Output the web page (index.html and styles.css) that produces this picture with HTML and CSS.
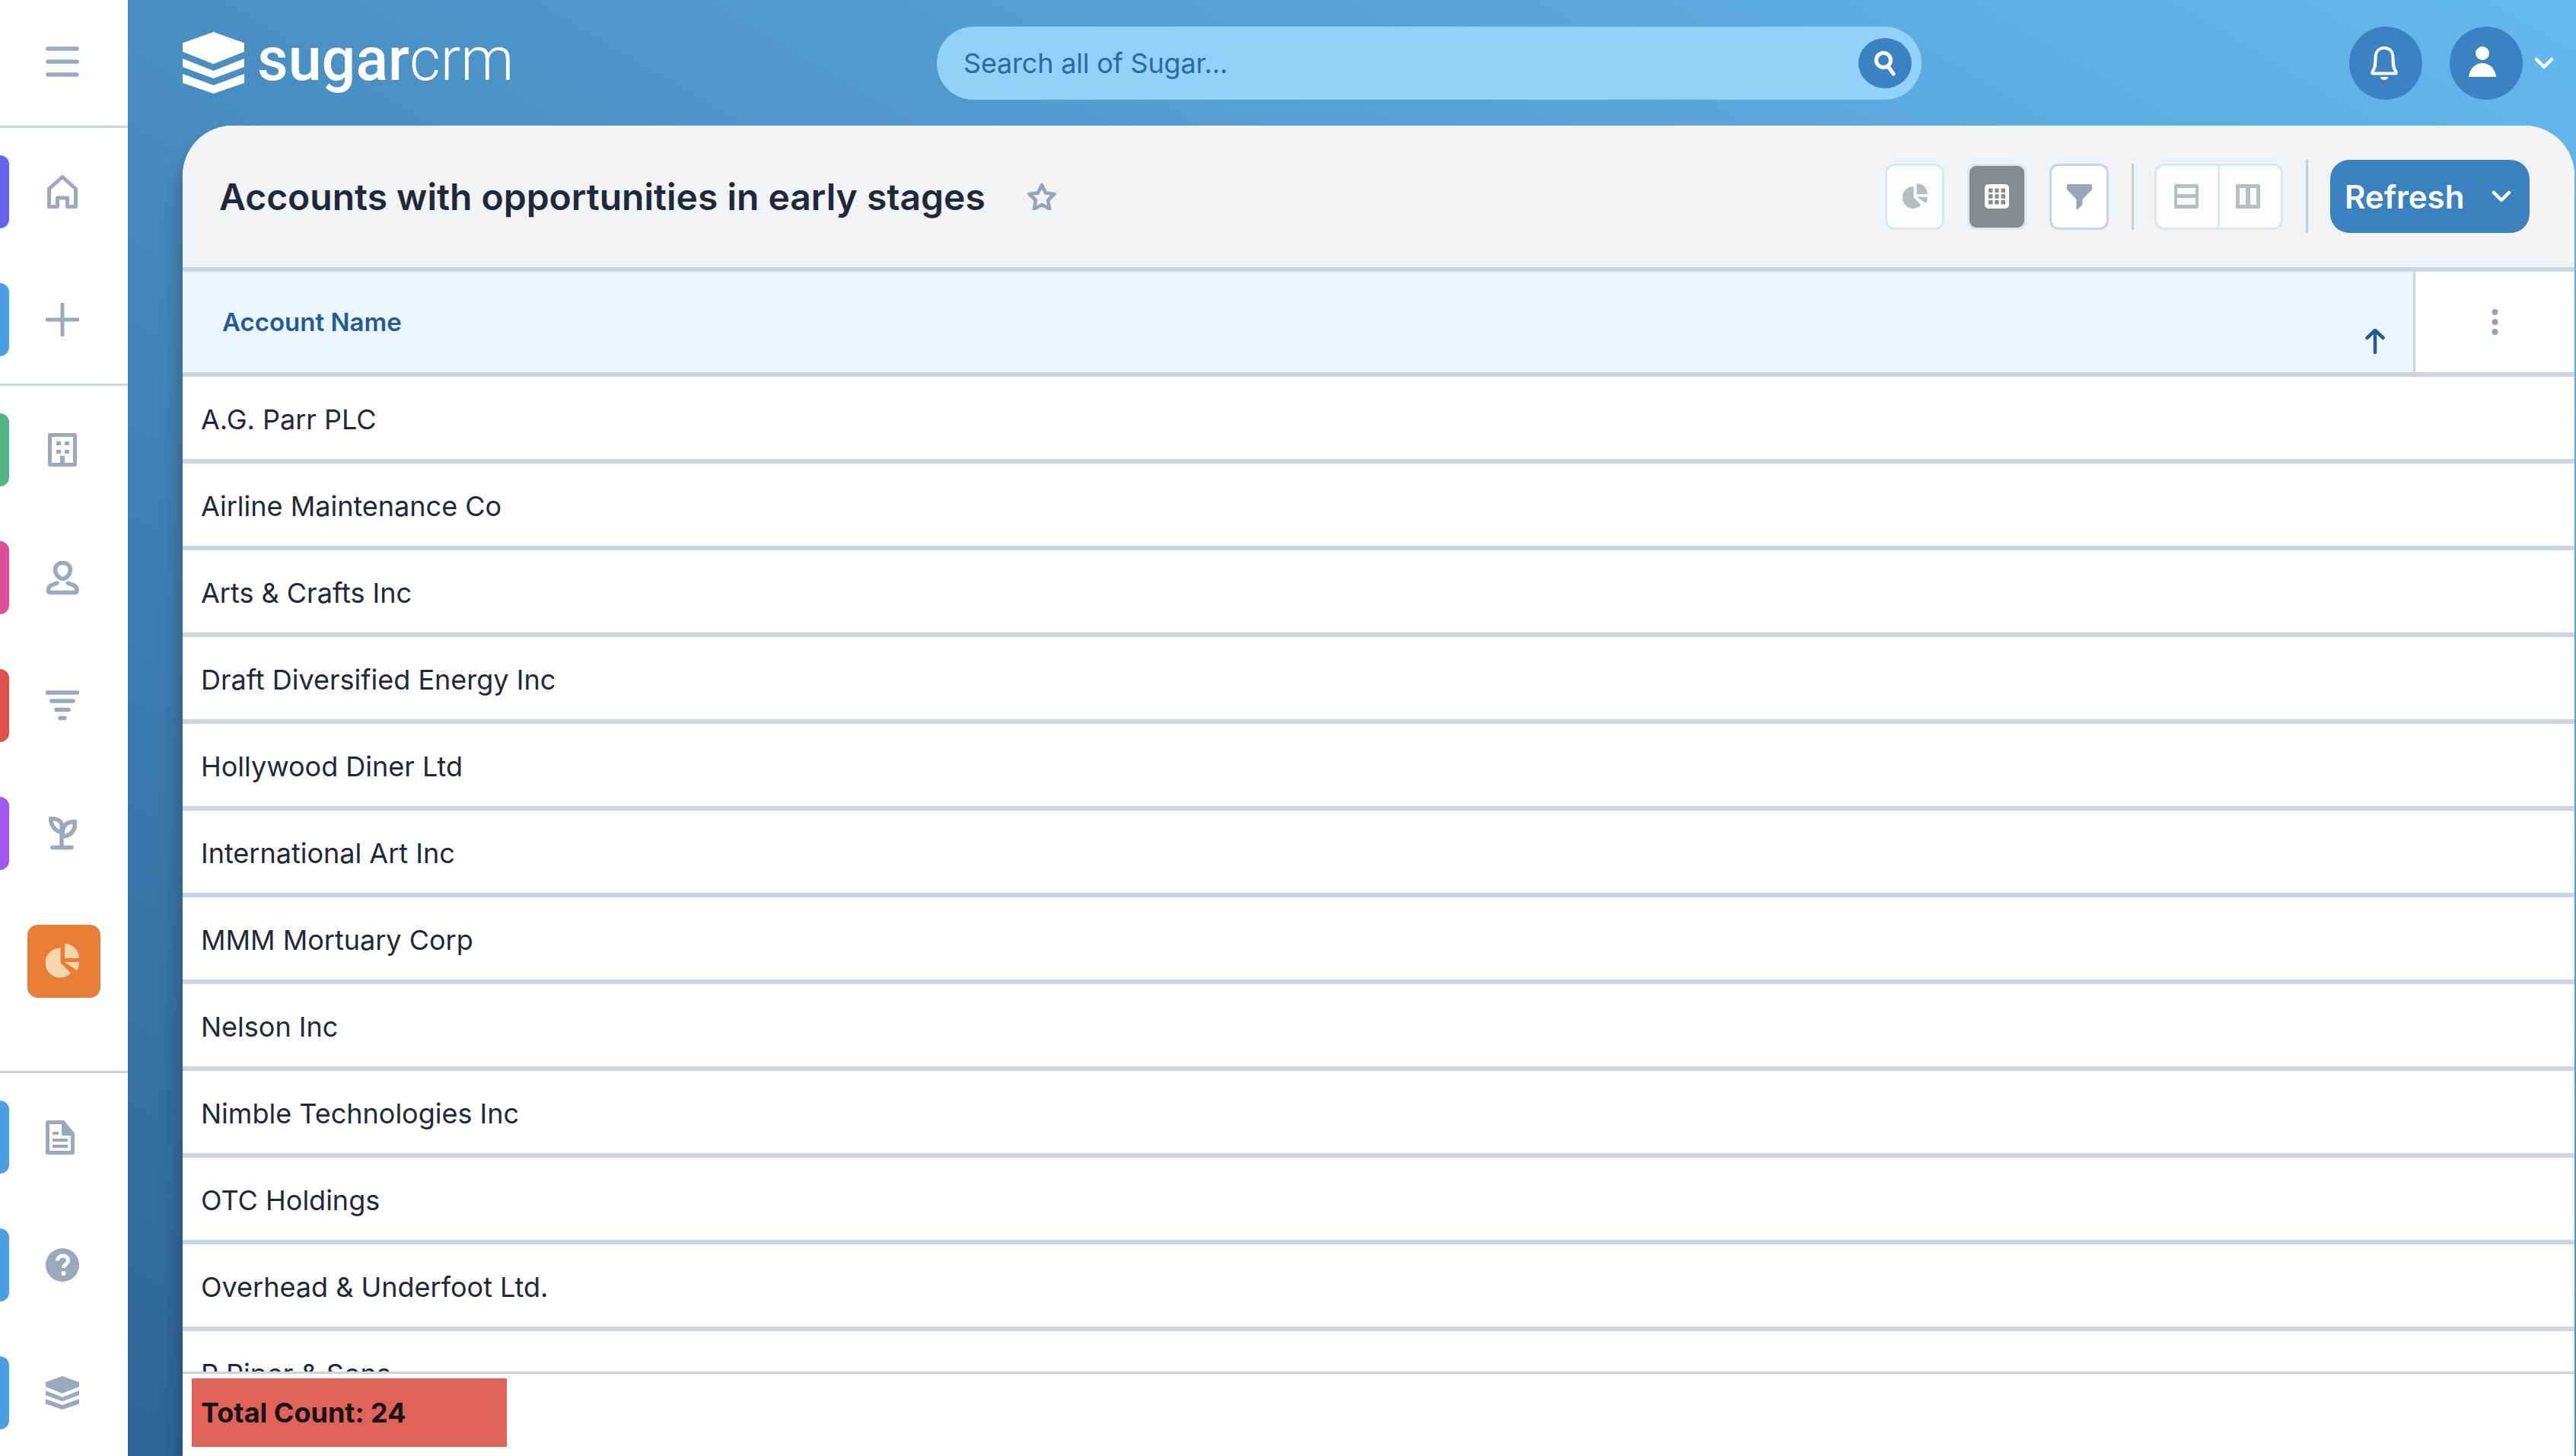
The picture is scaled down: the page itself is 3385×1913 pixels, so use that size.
FILE: index.html
```html
<!DOCTYPE html>
<html lang="en">
<head>
<meta charset="utf-8">
<title>Accounts with opportunities in early stages</title>
<link rel="stylesheet" href="styles.css">
</head>
<body>
<div class="app">
  <aside class="sidebar">
    <div class="side-top">
      <svg class="icon" width="44" height="40" viewBox="0 0 44 40"><path d="M3 3h38M3 20h38M3 37h38" fill="none" stroke="currentColor" stroke-width="5.500" stroke-linecap="round"/></svg>
    </div>
    <div class="side-group">
      <div class="nav-item"><span class="pill pill-indigo"></span>
        <svg class="icon" width="40" height="44" viewBox="0 0 40 44"><path d="M20 2.500 37.500 18v23.500H26.500V30h-13v11.500H2.500V18z" fill="none" stroke="currentColor" stroke-width="5" stroke-linejoin="round"/></svg></div>
      <div class="nav-item"><span class="pill pill-blue"></span>
        <svg class="icon" width="44" height="44" viewBox="0 0 44 44"><path d="M22 2v40M2 22h40" fill="none" stroke="currentColor" stroke-width="5" stroke-linecap="round"/></svg></div>
    </div>
    <div class="side-group side-group-main">
      <div class="nav-item"><span class="pill pill-green"></span>
        <svg class="icon" width="38" height="44" viewBox="0 0 38 44"><path d="M3 0h32a3 3 0 0 1 3 3v38a3 3 0 0 1-3 3H3a3 3 0 0 1-3-3V3a3 3 0 0 1 3-3zm2 5v34h11v-9h6v9h11V5zm6 6h6v5h-6zm11 0h6v5h-6zm-11 11h6v5h-6zm11 0h6v5h-6z" fill="currentColor" fill-rule="evenodd"/></svg></div>
      <div class="nav-item"><span class="pill pill-pink"></span>
        <svg class="icon" width="44" height="45" viewBox="0 0 44 45"><path d="M22.500 2.500C29 2.500 32.500 7 32.500 12 32.500 17 27 23.500 22.500 23.500 18 23.500 12.500 17 12.500 12 12.500 7 16 2.500 22.500 2.500zM15 29C9 31.500 3.500 32 3.500 38 3.500 41 4.500 41.500 6 41.500H39C40.500 41.500 41 41 41 38 41 32 35 31.500 29 29" fill="none" stroke="currentColor" stroke-width="5.500" stroke-linecap="round" stroke-linejoin="round"/></svg></div>
      <div class="nav-item"><span class="pill pill-red"></span>
        <svg class="icon" width="44" height="40" viewBox="0 0 44 40"><path d="M2.500 3h39M8 14h28M14 25.500h16M19 36.500h6" fill="none" stroke="currentColor" stroke-width="5.500" stroke-linecap="round"/></svg></div>
      <div class="nav-item"><span class="pill pill-purple"></span>
        <svg class="icon" width="37" height="44" viewBox="0 0 37 44"><path d="M2.500 2.500c6 0 12 1 14 6 1 3 1 8 0 12C9 19 2.500 12 2.500 2.500zM34.500 6.500c-8 0-13.500 3-15.500 9-1 3-1 7 0 10.500 9-1 13-5 15-12zM17 21v19M5 40.500h25" fill="none" stroke="currentColor" stroke-width="5.500" stroke-linecap="round" stroke-linejoin="round"/></svg></div>
      <div class="nav-item"><div class="nav-active">
        <svg class="icon-active" width="44" height="46" viewBox="0 0 44 46"><path d="M19.500 5.500V25L33 38.500A19.500 19.500 0 1 1 19.500 5.500z" fill="currentColor"/><path d="M25 0A19 19 0 0 1 44 19H25zM25 24H44C44 28 43 32 41 35z" fill="currentColor"/></svg>
      </div></div>
    </div>
    <div class="side-group">
      <div class="nav-item"><span class="pill pill-blue"></span>
        <svg class="icon icon-doc" width="38" height="45" viewBox="0 0 38 45"><path d="M3 0h21l14 17v25a3 3 0 0 1-3 3H3a3 3 0 0 1-3-3V3a3 3 0 0 1 3-3zm2 5v35h28V20H23a2 2 0 0 1-2-2V5zm4 10h8v4H9zm0 9h20v4H9zm0 8h20v4H9z" fill="currentColor" fill-rule="evenodd"/></svg></div>
      <div class="nav-item"><span class="pill pill-blue"></span>
        <svg class="icon" width="44" height="44" viewBox="0 0 44 44"><circle cx="22" cy="22" r="22" fill="currentColor"/><path d="M15.500 16.500c0-4 3-6.500 7-6.500s7 2.500 7 6c0 5.500-6 5-6 10" fill="none" stroke="#fff" stroke-width="5"/><circle cx="23.500" cy="33" r="3" fill="#fff"/></svg></div>
      <div class="nav-item"><span class="pill pill-blue"></span>
        <svg class="icon" width="44" height="44" viewBox="0 0 81 81"><path d="M40.500 0 81 14.500V26L40.500 42 0 26V14.500zM0 35l40.500 16L81 35v11L40.500 61 0 46zM0 55l40.500 15L81 55v12L40.500 81 0 67z" fill="currentColor"/></svg></div>
    </div>
  </aside>
  <main class="main">
    <header class="topbar">
      <div class="logo">
        <svg class="logo-mark" width="81" height="81" viewBox="0 0 81 81"><path d="M40.500 0 81 14.500V26L40.500 42 0 26V14.500zM0 35l40.500 16L81 35v11L40.500 61 0 46zM0 55l40.500 15L81 55v12L40.500 81 0 67z" fill="#fff"/></svg>
        <span class="logo-text"><span class="logo-sugar">sugar</span><span class="logo-crm">crm</span></span>
      </div>
      <div class="search">
        <span class="search-text">Search all of Sugar...</span>
        <span class="search-btn"><svg width="30" height="34" viewBox="0 0 30 34"><circle cx="13" cy="13" r="9.500" fill="none" stroke="#fff" stroke-width="5"/><path d="m19 21 7 10" stroke="#fff" stroke-width="5" stroke-linecap="round"/></svg></span>
      </div>
      <div class="actions">
        <span class="round-btn"><svg class="bell" width="36" height="44" viewBox="0 0 36 44"><path d="M18 2C10 2 6.500 8 6.500 15 6.500 24 6 29 2.500 33v2.500h31V33C30 29 29.500 24 29.500 15 29.500 8 26 2 18 2z" fill="none" stroke="#fff" stroke-width="4" stroke-linejoin="round"/><path d="M12.500 40h11c-1 3-3 4-5.500 4s-4.500-1-5.500-4z" fill="#fff"/></svg></span>
        <span class="round-btn round-user"><svg class="user" width="36" height="40" viewBox="0 0 36 40"><circle cx="18" cy="9" r="9" fill="#fff"/><path d="M0 40C1 30 8 22 18 22S35 30 36 40z" fill="#fff"/></svg></span>
        <svg class="user-caret" width="26" height="16" viewBox="0 0 26 16"><path d="m3 3 10 10L23 3" fill="none" stroke="#fff" stroke-width="4.500" stroke-linecap="round" stroke-linejoin="round"/></svg>
      </div>
    </header>
    <section class="panel">
      <div class="titlebar">
        <h1 class="title">Accounts with opportunities in early stages</h1>
        <svg class="star" width="38" height="36" viewBox="0 0 38 36"><path d="m19 3 5 10.500 11.500 1.500-8.500 8 2.200 11.500L19 29l-10.200 5.500L11 23l-8.500-8L14 13.500z" fill="none" stroke="#94a3b8" stroke-width="4.500" stroke-linejoin="round"/></svg>
        <div class="tools">
          <span class="tool tool-disabled"><svg width="33" height="34" viewBox="0 0 44 46"><path d="M19.500 5.500V25L33 38.500A19.500 19.500 0 1 1 19.500 5.500z" fill="#b9bdc2"/><path d="M25 0A19 19 0 0 1 44 19H25zM25 24H44C44 28 43 32 41 35z" fill="#b9bdc2"/></svg></span>
          <span class="tool tool-selected"><svg width="32" height="32" viewBox="0 0 32 32"><path d="M5 0h22a5 5 0 0 1 5 5v22a5 5 0 0 1-5 5H5a5 5 0 0 1-5-5V5a5 5 0 0 1 5-5zm0 5.500v5.500h5.500V5.500zm8.300 0v5.500h5.400V5.500zm8.200 0v5.500H27V5.500zM5 13.300v5.400h5.500v-5.400zm8.300 0v5.400h5.400v-5.400zm8.200 0v5.400H27v-5.400zM5 21v5.500h5.500V21zm8.300 0v5.500h5.400V21zm8.200 0v5.500H27V21z" fill="#fff" fill-rule="evenodd"/></svg></span>
          <span class="tool"><svg width="33" height="33" viewBox="0 0 33 33"><path d="M2 0h29a2 2 0 0 1 2 2v5L20.500 20v7l-6 5.500a1 1 0 0 1-2-.5V20L0 7V2a2 2 0 0 1 2-2z" fill="#97a5bb"/></svg></span>
          <span class="vline"></span>
          <div class="tool-group">
            <span class="tool-seg"><svg class="seg-icon" width="32" height="32" viewBox="0 0 32 32"><path d="M2 0h28a2 2 0 0 1 2 2v28a2 2 0 0 1-2 2H2a2 2 0 0 1-2-2V2a2 2 0 0 1 2-2zm2 5v8h24V5zm0 13v9h24v-9z" fill="#b9bdc2" fill-rule="evenodd"/></svg></span>
            <span class="tool-seg tool-seg-last"><svg class="seg-icon-last" width="32" height="32" viewBox="0 0 32 32"><path d="M2 0h28a2 2 0 0 1 2 2v28a2 2 0 0 1-2 2H2a2 2 0 0 1-2-2V2a2 2 0 0 1 2-2zm3 5v22h8V5zm14 0v22h8V5z" fill="#b9bdc2" fill-rule="evenodd"/></svg></span>
          </div>
          <span class="vline vline-tall"></span>
          <button class="refresh"><span>Refresh</span><svg width="26" height="16" viewBox="0 0 26 16"><path d="m3 3 10 10L23 3" fill="none" stroke="#fff" stroke-width="4.500" stroke-linecap="round" stroke-linejoin="round"/></svg></button>
        </div>
      </div>
      <div class="table">
        <div class="thead">
          <div class="th-name">
            <span>Account Name</span>
            <svg class="sort" width="28" height="34" viewBox="0 0 28 34"><path d="M14 32V3M3.500 13 14 3l10.500 10" fill="none" stroke="#255a94" stroke-width="4.500" stroke-linecap="round" stroke-linejoin="round"/></svg>
          </div>
          <div class="th-more"><svg width="9" height="34" viewBox="0 0 9 34"><circle cx="4.500" cy="4" r="4" fill="#94a3b8"/><circle cx="4.500" cy="17" r="4" fill="#94a3b8"/><circle cx="4.500" cy="30" r="4" fill="#94a3b8"/></svg></div>
        </div>
        <div class="row">A.G. Parr PLC</div>
        <div class="row">Airline Maintenance Co</div>
        <div class="row">Arts &amp; Crafts Inc</div>
        <div class="row">Draft Diversified Energy Inc</div>
        <div class="row">Hollywood Diner Ltd</div>
        <div class="row">International Art Inc</div>
        <div class="row">MMM Mortuary Corp</div>
        <div class="row">Nelson Inc</div>
        <div class="row">Nimble Technologies Inc</div>
        <div class="row">OTC Holdings</div>
        <div class="row">Overhead &amp; Underfoot Ltd.</div>
        <div class="row">P Piper &amp; Sons</div>
      </div>
      <footer class="footer"><div class="total">Total Count: 24</div></footer>
    </section>
  </main>
</div>
</body>
</html>
```
FILE: styles.css
```css
* { box-sizing: border-box; }
html, body { margin: 0; height: 100%; overflow: hidden; }
body { font-family: Inter, "Liberation Sans", sans-serif; color: #1e293b; background: #fff; }
.app { display: flex; height: 1913px; width: 100%; }

/* sidebar */
.sidebar { flex: 0 0 168px; background: #fff; display: flex; flex-direction: column; overflow: hidden; }
.side-top { flex: none; height: 168px; padding-bottom: 3px; border-bottom: 3px solid #cbd5e1; display: flex; align-items: center; justify-content: center; }
.side-group { flex: none; display: flex; flex-direction: column; gap: 72px; padding: 36px 0; border-bottom: 3px solid #cbd5e1; }
.side-group:last-child { border-bottom: 0; padding-bottom: 0; }
.side-group-main { padding-bottom: 96px; }
.nav-item { flex: none; height: 96px; position: relative; display: flex; align-items: center; justify-content: center; }
.pill { position: absolute; left: 0; top: 0; width: 12px; height: 96px; border-radius: 0 12px 12px 0; }
.pill-indigo { background: #6366e8; }
.pill-blue { background: #4a9fe3; }
.pill-green { background: #53b485; }
.pill-pink { background: #dc4f98; }
.pill-red { background: #e0524c; }
.pill-purple { background: #a058ee; }
.icon { color: #9ba9bf; display: block; margin-right: 4px; }
.icon-doc { margin-right: 10px; }
.nav-active { width: 96px; height: 96px; background: #ea7e37; border-radius: 14px; display: flex; align-items: center; justify-content: center; }
.icon-active { color: #f8d5ab; display: block; margin-right: 4px; }

/* main */
.main { flex: 1; min-width: 0; display: flex; flex-direction: column; background: linear-gradient(to top right, #2d6596, #65b8f0); }
.topbar { flex: 0 0 165px; display: flex; align-items: center; padding: 0 29px 0 72px; }
.logo { flex: 0 0 991px; display: flex; align-items: center; gap: 17px; color: #fff; }
.logo-mark { display: block; }
.logo-text { font-family: Roboto, "Noto Sans", sans-serif; font-size: 79px; line-height: 1; margin-top: -8px; }
.logo-sugar { font-weight: 500; }
.logo-crm { font-weight: 300; }
.search { flex: 0 0 1294px; height: 96px; background: #92d1f8; border-radius: 48px; display: flex; align-items: center; justify-content: space-between; padding: 0 13px 0 35px; }
.search-text { font-size: 36px; letter-spacing: -0.2px; color: #2f68a0; }
.search-btn { width: 70px; height: 66px; border-radius: 50%; background: #3a82c2; display: flex; align-items: center; justify-content: center; }
.actions { margin-left: auto; display: flex; align-items: center; }
.round-btn { width: 96px; height: 96px; border-radius: 50%; background: #3a82c2; display: flex; align-items: center; justify-content: center; }
.round-user { margin-left: 36px; }
.bell { margin-right: 4px; display: block; }
.user { margin: 0 10px 3px 0; display: block; }
.user-caret { margin-left: 15px; display: block; }

/* panel */
.panel { flex: 1; min-height: 0; margin: 0 2px 0 72px; background: #fff; border-radius: 66px 66px 0 0; display: flex; flex-direction: column; overflow: hidden; box-shadow: -12px 24px 24px -6px rgba(0,0,0,.22); }
.titlebar { flex: 0 0 192px; background: #f1f3f5; border-bottom: 6px solid #cbd5e1; display: flex; align-items: center; padding: 0 59px 0 48px; }
.title { margin: 0; font-size: 48px; font-weight: 600; color: #1e293b; }
.star { margin-left: 55px; display: block; }
.tools { margin-left: auto; display: flex; align-items: center; gap: 30px; }
.tool { width: 78px; height: 87px; border: 3px solid #cbd5e1; border-radius: 12px; background: #fff; display: flex; align-items: center; justify-content: center; }
.tool-disabled { background: #fbfcfc; border-color: #dfe4ed; }
.tool-selected { background: #878b8e; border-color: #dfe4ed; }
.vline { width: 3px; height: 87px; background: #c8cdd3; }
.vline-tall { height: 96px; }
.tool-group { display: flex; width: 169px; height: 87px; border: 3px solid #dfe4ed; border-radius: 12px; background: #fbfcfc; margin-left: -3px; }
.tool-seg { flex: 1; display: flex; align-items: center; justify-content: center; border-right: 3px solid #dfe4ed; }
.tool-seg-last { border-right: 0; }
.seg-icon { margin-right: 2px; }
.seg-icon-last { margin-right: 6px; }
.refresh { width: 262px; height: 96px; margin-left: -1px; border: 0; border-radius: 25px; background: #3a81c0; color: #fff; font-family: Inter, "Liberation Sans", sans-serif; font-size: 42px; font-weight: 600; display: flex; align-items: center; justify-content: space-between; padding: 0 24px 0 19px; }

/* table */
.table { flex: 1; min-height: 0; overflow: hidden; background: #fff; }
.thead { display: flex; height: 138px; border-bottom: 6px solid #cbd5e1; }
.th-name { flex: 1; background: #ebf5fe; border-right: 3px solid #cbd5e1; position: relative; display: flex; align-items: center; padding-left: 52px; font-size: 33px; font-weight: 600; color: #255a94; }
.sort { position: absolute; right: 36px; bottom: 24px; }
.th-more { flex: 0 0 209px; display: flex; align-items: center; justify-content: center; }
.row { height: 114px; border-bottom: 6px solid #cbd5e1; padding: 4px 24px 0; display: flex; align-items: center; font-size: 36px; color: #1e293b; }

/* footer */
.footer { flex: 0 0 111px; background: #fff; border-top: 3px solid #cbd5e1; padding: 6px 12px 0; }
.total { width: 414px; height: 90px; background: #e0635a; display: flex; align-items: center; padding-left: 12px; font-size: 36px; font-weight: 700; color: #1a1418; }
```
